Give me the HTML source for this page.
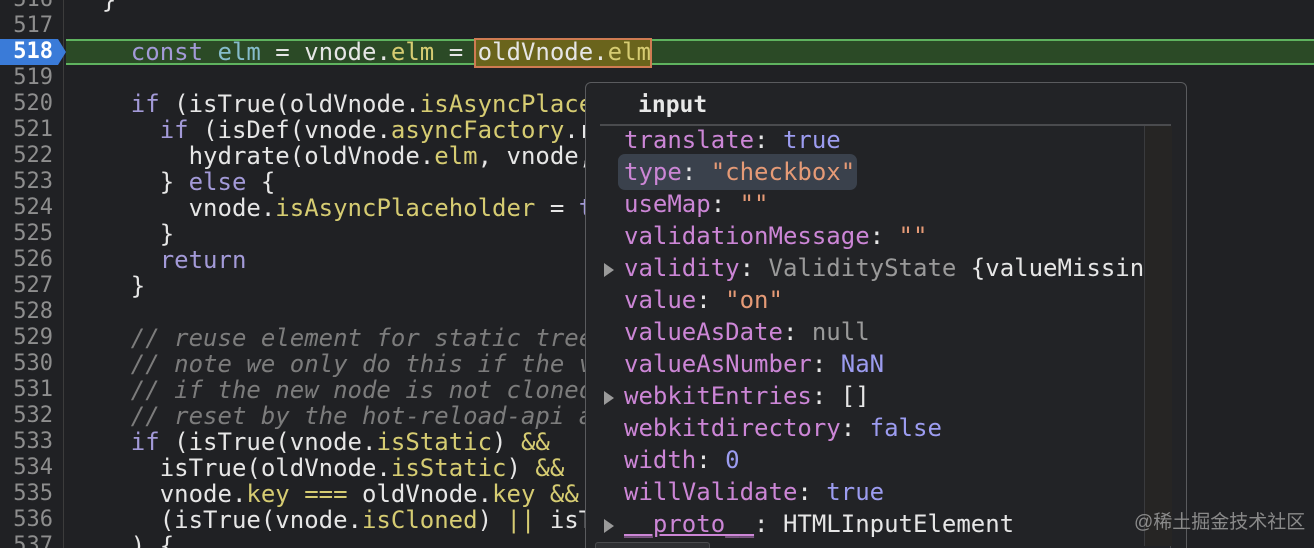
<!DOCTYPE html>
<html><head><meta charset="utf-8"><style>
html,body{margin:0;width:1314px;height:548px;overflow:hidden}
body{background:#202124;font-family:"DejaVu Sans Mono","Liberation Mono",monospace;position:relative}
.ln{position:absolute;left:0;width:53px;text-align:right;font-size:22px;color:#8e8e8e;line-height:26px}
.gut{position:absolute;left:63px;top:0;width:1px;height:548px;background:#3c3c3c}
.code{position:absolute;left:73px;top:0;width:585px;overflow:hidden;height:548px}
.cl{position:absolute;left:0;white-space:pre;font-size:24px;line-height:26px;color:#e6e6e6}
.k{color:#a39ad8}.v{color:#86bccb}.p{color:#d6cc72}.c{color:#7c7c7c;font-style:italic}
.hl{position:absolute;left:66px;right:0;top:39px;height:26px;background:#2b4a26;border-top:2px solid #5fb35f;border-bottom:2px solid #5fb35f;box-sizing:border-box}
.badge{position:absolute;left:0;top:39px;width:58px;height:26px;background:#3a7bd8;color:#fff;font-size:22px;line-height:26px;text-align:right;padding-right:5px;box-sizing:border-box;font-weight:bold}
.badge:after{content:"";position:absolute;right:-8px;top:0;border-left:8px solid #3a7bd8;border-top:13px solid transparent;border-bottom:13px solid transparent}
.box{position:absolute;left:474px;top:38px;width:178px;height:30px;background:#6a641c;border:2px solid #cf7b52;box-sizing:border-box}
.pop{position:absolute;left:585px;top:82px;width:602px;height:480px;background:#222326;border:1.5px solid #5a5b5e;border-radius:6px;box-sizing:border-box}
.inner{position:absolute;left:600px;top:124px;width:571px;height:430px;border-top:2px solid #4a4b4e;border-right:1.5px solid #4a4b4e;box-sizing:border-box}
.track{position:absolute;left:1144px;top:126px;width:27px;height:420px;background:#262524;border-left:1px solid #3a3b3e}
.pr{position:absolute;left:624px;white-space:pre;font-size:24px;line-height:32px;color:#e6e6e6}
.n{color:#cc86d6}.s{color:#e59a76}.b{color:#9c9cf0}.g{color:#9a9a9a}
.tri{position:absolute;left:604px;width:0;height:0;border-left:10px solid #9a9a9a;border-top:7px solid transparent;border-bottom:7px solid transparent}
</style></head><body>
<div class="gut"></div>
<div class="hl"></div>
<div class="ln" style="top:-13px">516</div><div class="ln" style="top:13px">517</div>
<div class="badge">518</div>
<div class="ln" style="top:65px">519</div><div class="ln" style="top:91px">520</div><div class="ln" style="top:117px">521</div><div class="ln" style="top:143px">522</div><div class="ln" style="top:169px">523</div><div class="ln" style="top:195px">524</div><div class="ln" style="top:221px">525</div><div class="ln" style="top:247px">526</div><div class="ln" style="top:273px">527</div><div class="ln" style="top:299px">528</div><div class="ln" style="top:325px">529</div><div class="ln" style="top:351px">530</div><div class="ln" style="top:377px">531</div><div class="ln" style="top:403px">532</div><div class="ln" style="top:429px">533</div><div class="ln" style="top:455px">534</div><div class="ln" style="top:481px">535</div><div class="ln" style="top:507px">536</div><div class="ln" style="top:533px">537</div>
<div class="box"></div>
<div class="code">
<div class="cl" style="top:-13px">  }</div>
<div class="cl" style="top:39px">    <span class="k">const</span> <span class="v">elm</span> = vnode.<span class="p">elm</span> = oldVnode.<span class="p">elm</span></div>
<div class="cl" style="top:91px">    <span class="k">if</span> (isTrue(oldVnode.<span class="p">isAsyncPlaceholder</span>)) {</div>
<div class="cl" style="top:117px">      <span class="k">if</span> (isDef(vnode.<span class="p">asyncFactory</span>.resolved)) {</div>
<div class="cl" style="top:143px">        hydrate(oldVnode.<span class="p">elm</span>, vnode, insertedVnodeQueue)</div>
<div class="cl" style="top:169px">      } <span class="k">else</span> {</div>
<div class="cl" style="top:195px">        vnode.<span class="p">isAsyncPlaceholder</span> = <span class="k">true</span></div>
<div class="cl" style="top:221px">      }</div>
<div class="cl" style="top:247px">      <span class="k">return</span></div>
<div class="cl" style="top:273px">    }</div>
<div class="cl c" style="top:325px">    // reuse element for static trees.</div>
<div class="cl c" style="top:351px">    // note we only do this if the vnode is cloned</div>
<div class="cl c" style="top:377px">    // if the new node is not cloned it means</div>
<div class="cl c" style="top:403px">    // reset by the hot-reload-api and we need</div>
<div class="cl" style="top:429px">    <span class="k">if</span> (isTrue(vnode.<span class="p">isStatic</span>) <span class="p">&amp;&amp;</span></div>
<div class="cl" style="top:455px">      isTrue(oldVnode.<span class="p">isStatic</span>) <span class="p">&amp;&amp;</span></div>
<div class="cl" style="top:481px">      vnode.<span class="p">key</span> <span class="p">===</span> oldVnode.<span class="p">key</span> <span class="p">&amp;&amp;</span></div>
<div class="cl" style="top:507px">      (isTrue(vnode.<span class="p">isCloned</span>) <span class="p">||</span> isTrue(vnode.isOnce))</div>
<div class="cl" style="top:533px">    ) {</div>
</div>
<div class="pop"></div>
<div style="position:absolute;left:638px;top:92px;font-size:23px;font-weight:bold;color:#e8e8e8">input</div>
<div class="inner"></div>
<div class="track"></div>
<div style="position:absolute;left:618px;top:154px;width:239px;height:36px;background:#3a414c;border-radius:7px"></div>
<div class="pr" style="top:124px"><span class="n">translate</span>: <span class="b">true</span></div>
<div class="pr" style="top:156px"><span class="n">type</span>: <span class="s">"checkbox"</span></div>
<div class="pr" style="top:188px"><span class="n">useMap</span>: <span class="s">""</span></div>
<div class="pr" style="top:220px"><span class="n">validationMessage</span>: <span class="s">""</span></div>
<div class="tri" style="top:263px"></div>
<div class="pr" style="top:252px;width:520px;overflow:hidden"><span class="n">validity</span>: <span class="g">ValidityState</span> {valueMissing</div>
<div class="pr" style="top:284px"><span class="n">value</span>: <span class="s">"on"</span></div>
<div class="pr" style="top:316px"><span class="n">valueAsDate</span>: <span class="g">null</span></div>
<div class="pr" style="top:348px"><span class="n">valueAsNumber</span>: <span class="b">NaN</span></div>
<div class="tri" style="top:391px"></div>
<div class="pr" style="top:380px"><span class="n">webkitEntries</span>: []</div>
<div class="pr" style="top:412px"><span class="n">webkitdirectory</span>: <span class="b">false</span></div>
<div class="pr" style="top:444px"><span class="n">width</span>: <span class="b">0</span></div>
<div class="pr" style="top:476px"><span class="n">willValidate</span>: <span class="b">true</span></div>
<div class="tri" style="top:519px"></div>
<div class="pr" style="top:508px"><span class="n" style="text-decoration:underline">__proto__</span>: HTMLInputElement</div>
<div style="position:absolute;left:595px;top:542px;width:113px;height:10px;background:#2e2f32;border:1px solid #4a4b4e;border-radius:3px"></div>
<div style="position:absolute;left:1134px;top:507px;font-size:19px;color:#8a8a8a;font-family:'Liberation Sans','Noto Sans CJK SC',sans-serif">@稀土掘金技术社区</div>
</body></html>
